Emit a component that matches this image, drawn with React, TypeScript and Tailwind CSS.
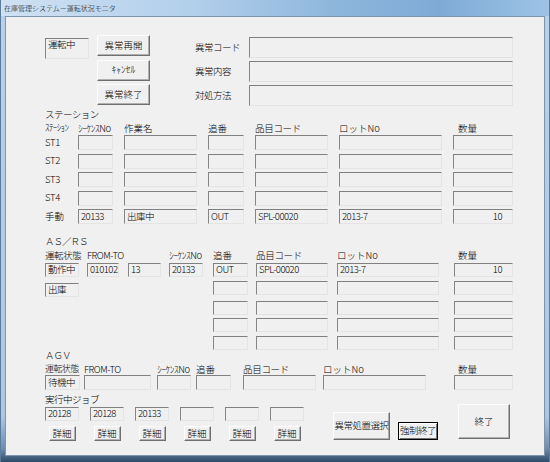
import React from "react";

type BoxP = { c: string; t?: string; right?: boolean; top?: boolean };
function Box({ c, t, right, top }: BoxP) {
  return (
    <div
      className={`${c} flex ${top ? "items-start pt-[1px]" : "items-center"} ${
        right ? "justify-end pr-[10px]" : "pl-[2px]"
      } overflow-hidden whitespace-nowrap tracking-[-0.5px] border border-t-[#808080] border-l-[#858585] border-r-[#e4e4e4] border-b-[#e4e4e4]`}
    >
      {t}
    </div>
  );
}

function Btn({ c, t }: { c: string; t: string }) {
  return (
    <div
      className={`${c} flex items-center justify-center whitespace-nowrap border border-t-[#fdfdfd] border-l-[#fdfdfd] border-r-[#6f6f6f] border-b-[#6f6f6f] shadow-[inset_-1px_-1px_0_#b0b0b0]`}
    >
      {t}
    </div>
  );
}

const Lbl = ({ t, c = "" }: { t: string; c?: string }) => (
  <div className={`${c} whitespace-nowrap h-[12px] leading-[12px]`}>{t}</div>
);

export default function App() {
  const stRows = ["ST1", "ST2", "ST3", "ST4"];
  return (
    <div className="w-[550px] h-[462px] flex flex-col overflow-hidden border-x border-[#5d7c9c] bg-[linear-gradient(180deg,#b7d2ec_0%,#abc8e5_90%,#6f8fb0_97%,#2f4a68_100%)] text-black text-[9.5px] leading-none font-light font-['Noto_Sans_CJK_JP',sans-serif]">
      {/* title bar */}
      <div className="h-[16px] shrink-0 flex items-center pl-[3px] text-[7px] bg-[linear-gradient(90deg,#cfe1f3_0%,#b2cfeb_35%,#8fb7dd_60%,#7eabd6_80%,#9ec3e6_100%)]">
        在庫管理システム－運転状況モニタ
      </div>
      {/* client area */}
      <div className="mx-[4px] mb-[6px] flex-1 flex flex-col border border-[#7d94ad] bg-[#f0f0f0] pl-[39px] pt-[18px]">
        {/* top section */}
        <div className="flex items-start">
          <Box c="w-[44px] h-[21px] mt-[3px]" t="運転中" top />
          <div className="ml-[8px] flex flex-col gap-[3.5px]">
            <Btn c="w-[53px] h-[21px]" t="異常再開" />
            <Btn c="w-[53px] h-[21px]" t="ｷｬﾝｾﾙ" />
            <Btn c="w-[53px] h-[21px]" t="異常終了" />
          </div>
          <div className="ml-[45px] mt-[2px] grid grid-cols-[54px_264px] gap-y-[3px] items-center">
            <div className="tracking-[-0.5px]">異常コード</div>
            <Box c="w-[264px] h-[21px]" />
            <div className="tracking-[-0.5px]">異常内容</div>
            <Box c="w-[264px] h-[21px]" />
            <div className="tracking-[-0.5px]">対処方法</div>
            <Box c="w-[264px] h-[21px]" />
          </div>
        </div>

        {/* station */}
        <Lbl c="mt-[2px] tracking-[-0.5px]" t="ステーション" />
        <div className="mt-[2px] grid grid-cols-[33px_46px_84px_47px_84px_114px_60px]">
          <Lbl c="text-[9px] tracking-[-0.6px]" t="ｽﾃｰｼｮﾝ" />
          <Lbl c="tracking-[-0.5px]" t="ｼｰｹﾝｽNo" />
          <Lbl t="作業名" />
          <Lbl t="追番" />
          <Lbl c="tracking-[-0.3px]" t="品目コード" />
          <Lbl t="ロットNo" />
          <Lbl c="pl-[5px]" t="数量" />
        </div>
        <div className="mt-[1px] grid grid-cols-[22px_35px_73px_36px_73px_103px_60px] gap-x-[11px] gap-y-[3.5px] items-center">
          {stRows.map((r) => (
            <React.Fragment key={r}>
              <div className="whitespace-nowrap tracking-[-0.3px]">{r}</div>
              <Box c="h-[15px]" />
              <Box c="h-[15px]" />
              <Box c="h-[15px]" />
              <Box c="h-[15px]" />
              <Box c="h-[15px]" />
              <Box c="h-[15px]" />
            </React.Fragment>
          ))}
          <div className="whitespace-nowrap">手動</div>
          <Box c="h-[15px]" t="20133" />
          <Box c="h-[15px]" t="出庫中" />
          <Box c="h-[15px]" t="OUT" />
          <Box c="h-[15px]" t="SPL-00020" />
          <Box c="h-[15px]" t="2013-7" />
          <Box c="h-[15px]" t="10" right />
        </div>

        {/* AS/RS */}
        <Lbl c="mt-[11px] tracking-[-1px]" t="ＡＳ／ＲＳ" />
        <div className="mt-[2px] grid grid-cols-[42px_41px_41px_44px_43px_81px_117px_59px]">
          <Lbl c="tracking-[-0.5px]" t="運転状態" />
          <Lbl c="tracking-[-0.5px]" t="FROM-TO" />
          <div />
          <Lbl c="tracking-[-0.5px]" t="ｼｰｹﾝｽNo" />
          <Lbl t="追番" />
          <Lbl c="tracking-[-0.3px]" t="品目コード" />
          <Lbl t="ロットNo" />
          <Lbl c="pl-[4px]" t="数量" />
        </div>
        <div className="mt-[2px] grid grid-cols-[42px_41px_41px_44px_43px_81px_117px_59px] gap-y-[3.75px]">
          <Box c="w-[34px] h-[14px]" t="動作中" />
          <Box c="w-[32px] h-[14px]" t="010102" />
          <Box c="w-[33px] h-[14px]" t="13" />
          <Box c="w-[34px] h-[14px]" t="20133" />
          <Box c="w-[35px] h-[14px]" t="OUT" />
          <Box c="w-[72px] h-[14px]" t="SPL-00020" />
          <Box c="w-[102px] h-[14px]" t="2013-7" />
          <Box c="w-[59px] h-[14px]" t="10" right />

          <Box c="w-[34px] h-[14px] mt-[2px]" t="出庫" />
          <div />
          <div />
          <div />
          <Box c="w-[35px] h-[14px]" />
          <Box c="w-[72px] h-[14px]" />
          <Box c="w-[102px] h-[14px]" />
          <Box c="w-[59px] h-[14px]" />

          {[0, 1, 2].map((i) => (
            <React.Fragment key={i}>
              <div className="col-start-5">
                <Box c="w-[35px] h-[14px]" />
              </div>
              <Box c="w-[72px] h-[14px]" />
              <Box c="w-[102px] h-[14px]" />
              <Box c="w-[59px] h-[14px]" />
            </React.Fragment>
          ))}
        </div>

        {/* AGV */}
        <Lbl c="-mt-[1px] tracking-[-1px]" t="ＡＧＶ" />
        <div className="mt-[2px] grid grid-cols-[39px_73px_39px_47px_80px_131px_59px]">
          <Lbl c="text-[9px] tracking-[-0.6px]" t="運転状態" />
          <Lbl c="tracking-[-0.5px]" t="FROM-TO" />
          <Lbl c="tracking-[-0.5px]" t="ｼｰｹﾝｽNo" />
          <Lbl t="追番" />
          <Lbl c="tracking-[-0.3px]" t="品目コード" />
          <Lbl t="ロットNo" />
          <Lbl c="pl-[4px]" t="数量" />
        </div>
        <div className="grid grid-cols-[39px_73px_39px_47px_80px_131px_59px]">
          <Box c="w-[35px] h-[15px]" t="待機中" />
          <Box c="w-[67px] h-[15px]" />
          <Box c="w-[34px] h-[15px]" />
          <Box c="w-[35px] h-[15px]" />
          <Box c="w-[73px] h-[15px]" />
          <Box c="w-[103px] h-[15px]" />
          <Box c="w-[59px] h-[15px]" />
        </div>

        {/* jobs + bottom buttons */}
        <div className="mt-[3px] flex items-end">
          <div className="flex flex-col">
            <Lbl c="tracking-[-0.5px]" t="実行中ジョブ" />
            <div className="mt-[2px] grid grid-cols-[34px_34px_34px_34px_34px_34px] gap-x-[11px] gap-y-[5px]">
              <Box c="h-[14px]" t="20128" />
              <Box c="h-[14px]" t="20128" />
              <Box c="h-[14px]" t="20133" />
              <Box c="h-[14px]" />
              <Box c="h-[14px]" />
              <Box c="h-[14px]" />
              {[0, 1, 2, 3, 4, 5].map((i) => (
                <div key={i} className="flex justify-center">
                  <Btn c="w-[27px] h-[15px]" t="詳細" />
                </div>
              ))}
            </div>
          </div>
          <Btn c="ml-[29px] mb-[1px] w-[57px] h-[28px] tracking-[-0.5px]" t="異常処置選択" />
          <div className="ml-[8px] mb-[1px] w-[40px] h-[18px] flex items-center justify-center whitespace-nowrap border border-black shadow-[inset_1px_1px_0_#fdfdfd,inset_-1px_-1px_0_#707070] tracking-[-0.5px]">
            強制終了
          </div>
          <Btn c="ml-[20px] mb-[2px] w-[52px] h-[35px]" t="終了" />
        </div>
      </div>
    </div>
  );
}
